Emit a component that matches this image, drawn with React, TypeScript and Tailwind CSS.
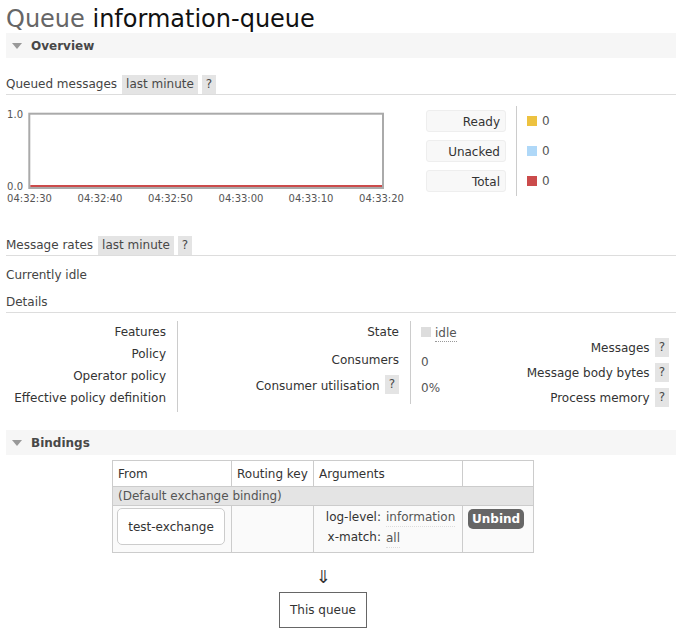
import React from "react";

const Tri = () => (
  <svg width="10" height="6" viewBox="0 0 10 6" className="shrink-0">
    <path d="M0 0 L10 0 L5 6 Z" fill="#999" />
  </svg>
);

const Tag = ({ children }: { children: React.ReactNode }) => (
  <span className="bg-[#e4e4e4] px-[4px] h-[19px] leading-[19px] inline-block text-[#484848]">{children}</span>
);

const SectionHeader = ({ title }: { title: string }) => (
  <div className="h-[25px] bg-[#f6f6f6] flex items-center pl-[6px] gap-[9px]">
    <Tri />
    <span className="font-bold text-[#484848]">{title}</span>
  </div>
);

const Chart = () => {
  const ticks = [
    { x: 23.5, t: "04:32:30" },
    { x: 94, t: "04:32:40" },
    { x: 164.5, t: "04:32:50" },
    { x: 235, t: "04:33:00" },
    { x: 305, t: "04:33:10" },
    { x: 375.5, t: "04:33:20" },
  ];
  return (
    <svg width="400" height="100" viewBox="0 0 400 100" className="shrink-0">
      <text x="17" y="13.5" fontSize="10" textAnchor="end" fill="#545454" fontFamily="DejaVu Sans, sans-serif">1.0</text>
      <text x="17" y="85.5" fontSize="10" textAnchor="end" fill="#545454" fontFamily="DejaVu Sans, sans-serif">0.0</text>
      <rect x="23.3" y="9.7" width="353.7" height="74.3" fill="#fff" stroke="#aaa" strokeWidth="2" />
      <line x1="24.3" y1="82" x2="376" y2="82" stroke="#cb4b4b" strokeWidth="2" />
      {ticks.map((k) => (
        <text key={k.t} x={k.x} y="97.5" fontSize="10" textAnchor="middle" fill="#545454" fontFamily="DejaVu Sans, sans-serif">
          {k.t}
        </text>
      ))}
    </svg>
  );
};

const LegendBox = ({ label }: { label: string }) => (
  <div className="w-[80px] h-[22px] leading-[22px] bg-[#f8f8f8] border border-[#eee] rounded-[3px] text-right pr-[5px] text-[#333]">
    {label}
  </div>
);

const LegendVal = ({ color }: { color: string }) => (
  <div className="h-[22px] flex items-center gap-[5px]">
    <span className={`w-[10px] h-[10px] inline-block ${color}`} />
    <span className="text-[#555]">0</span>
  </div>
);

export default function App() {
  return (
    <div className="w-[676px] min-h-[639px] bg-white pl-[6px] text-[12px] text-[#484848] font-['DejaVu_Sans',Verdana,sans-serif] overflow-hidden">
      <h1 className="pt-[5px] text-[24px] leading-[28px] font-normal">
        <span className="text-[#666]">Queue</span> <span className="text-[#111]">information-queue</span>
      </h1>

      <SectionHeader title="Overview" />

      <div className="mt-[17px] flex items-end border-b border-[#ddd] leading-[19px]">
        <span className="text-[#444]">Queued messages</span>
        <span className="ml-[5px]"><Tag>last minute</Tag></span>
        <span className="ml-[4px]"><Tag>?</Tag></span>
      </div>

      <div className="mt-[9px] flex items-start">
        <Chart />
        <div className="ml-[20px] mt-[2px] flex items-start">
          <div className="pt-[4px] flex flex-col gap-[8px]">
            <LegendBox label="Ready" />
            <LegendBox label="Unacked" />
            <LegendBox label="Total" />
          </div>
          <div className="ml-[10px] border-l border-[#ccc] h-[90px] pl-[10px] pt-[4px] flex flex-col gap-[8px]">
            <LegendVal color="bg-[#edc240]" />
            <LegendVal color="bg-[#afd8f8]" />
            <LegendVal color="bg-[#cb4b4b]" />
          </div>
        </div>
      </div>

      <div className="mt-[32px] flex items-end border-b border-[#ddd] leading-[19px]">
        <span className="text-[#444]">Message rates</span>
        <span className="ml-[5px]"><Tag>last minute</Tag></span>
        <span className="ml-[4px]"><Tag>?</Tag></span>
      </div>

      <div className="mt-[10px] leading-[19px] text-[#444]">Currently idle</div>

      <div className="mt-[8px] leading-[19px] border-b border-[#ddd] text-[#444]">Details</div>

      <div className="mt-[8px] flex items-start">
        <div className="w-[172px] border-r border-[#ccc] pr-[11px] pb-[3px] text-right text-[#333]">
          <div className="h-[22px] leading-[22px]">Features</div>
          <div className="h-[22px] leading-[22px]">Policy</div>
          <div className="h-[22px] leading-[22px]">Operator policy</div>
          <div className="h-[22px] leading-[22px] whitespace-nowrap">Effective policy definition</div>
        </div>

        <div className="w-[233px] border-r border-[#ccc] pr-[11px] pb-[7px] text-right text-[#333]">
          <div className="h-[22px] leading-[22px]">State</div>
          <div className="h-[32px] leading-[32px] pt-[1px]">Consumers</div>
          <div className="h-[22px] flex justify-end items-start gap-[5px]">
            <span className="leading-[20px] mt-[1px]">Consumer utilisation</span>
            <Tag>?</Tag>
          </div>
        </div>

        <div className="pl-[10px] text-[#555]">
          <div className="h-[22px] flex items-center gap-[4px]">
            <span className="w-[10px] h-[10px] bg-[#ddd] inline-block" />
            <span className="border-b border-dotted border-[#999] leading-[15px] mt-[3px]">idle</span>
          </div>
          <div className="h-[32px] leading-[32px] pt-[3px]">0</div>
          <div className="h-[22px] leading-[22px] pt-[2px]">0%</div>
        </div>

        <div className="ml-auto pr-[7px] pt-[14px] text-[#333] flex flex-col items-end">
          <div className="h-[25px] flex items-center gap-[5px]">
            <span>Messages</span>
            <span className="bg-[#e4e4e4] px-[4px] h-[19px] leading-[19px] text-[#484848]">?</span>
          </div>
          <div className="h-[25px] flex items-center gap-[5px]">
            <span>Message body bytes</span>
            <span className="bg-[#e4e4e4] px-[4px] h-[19px] leading-[19px] text-[#484848]">?</span>
          </div>
          <div className="h-[25px] flex items-center gap-[5px]">
            <span>Process memory</span>
            <span className="bg-[#e4e4e4] px-[4px] h-[19px] leading-[19px] text-[#484848]">?</span>
          </div>
        </div>
      </div>

      <div className="mt-[18px]">
        <SectionHeader title="Bindings" />
      </div>

      <div className="ml-[106px] inline-flex flex-col items-center">
        <table className="mt-[5px] border-collapse border border-[#ccc] text-[#333]">
          <thead>
            <tr className="h-[26px] bg-white">
              <th className="w-[119px] border border-[#ccc] text-left font-normal px-[5px]">From</th>
              <th className="w-[82px] border border-[#ccc] text-left font-normal px-[5px] whitespace-nowrap">Routing key</th>
              <th className="w-[149px] border border-[#ccc] text-left font-normal px-[5px]">Arguments</th>
              <th className="w-[71px] border border-[#ccc]"></th>
            </tr>
          </thead>
          <tbody>
            <tr className="h-[19px]">
              <td colSpan={4} className="bg-[#e4e4e4] border border-[#ccc] px-[5px] leading-[18px] text-[#555]">
                (Default exchange binding)
              </td>
            </tr>
            <tr className="bg-[#fafafa] h-[47px]">
              <td className="border border-[#ccc] align-top pl-[4px] pt-[2px] pb-[7px]">
                <div className="w-[108px] h-[37px] bg-white border border-[#ccc] rounded-[5px] flex items-center justify-center text-[#333]">
                  test-exchange
                </div>
              </td>
              <td className="border border-[#ccc]"></td>
              <td className="border border-[#ccc] align-top pt-[1px]">
                <div className="grid grid-cols-[67px_auto] gap-x-[5px]">
                  <div className="text-right leading-[20px] text-[#333]">log-level:</div>
                  <div className="leading-[18px] mt-[1px] text-[#555] border-b border-dotted border-[#ddd] justify-self-start">information</div>
                  <div className="text-right leading-[20px] text-[#333]">x-match:</div>
                  <div className="leading-[18px] mt-[2px] text-[#555] border-b border-dotted border-[#ddd] justify-self-start">all</div>
                </div>
              </td>
              <td className="border border-[#ccc] align-top pl-[5px] pt-[3px]">
                <span className="inline-block bg-[#666] text-white font-bold rounded-[5px] px-[4px] h-[20px] leading-[20px]">Unbind</span>
              </td>
            </tr>
          </tbody>
        </table>
        <div className="mt-[14px] text-[18px] leading-[20px] text-[#333]">⇓</div>
        <div className="mt-[5px] border border-[#666] px-[10px] h-[36px] leading-[34px] text-[#333]">This queue</div>
      </div>
    </div>
  );
}
